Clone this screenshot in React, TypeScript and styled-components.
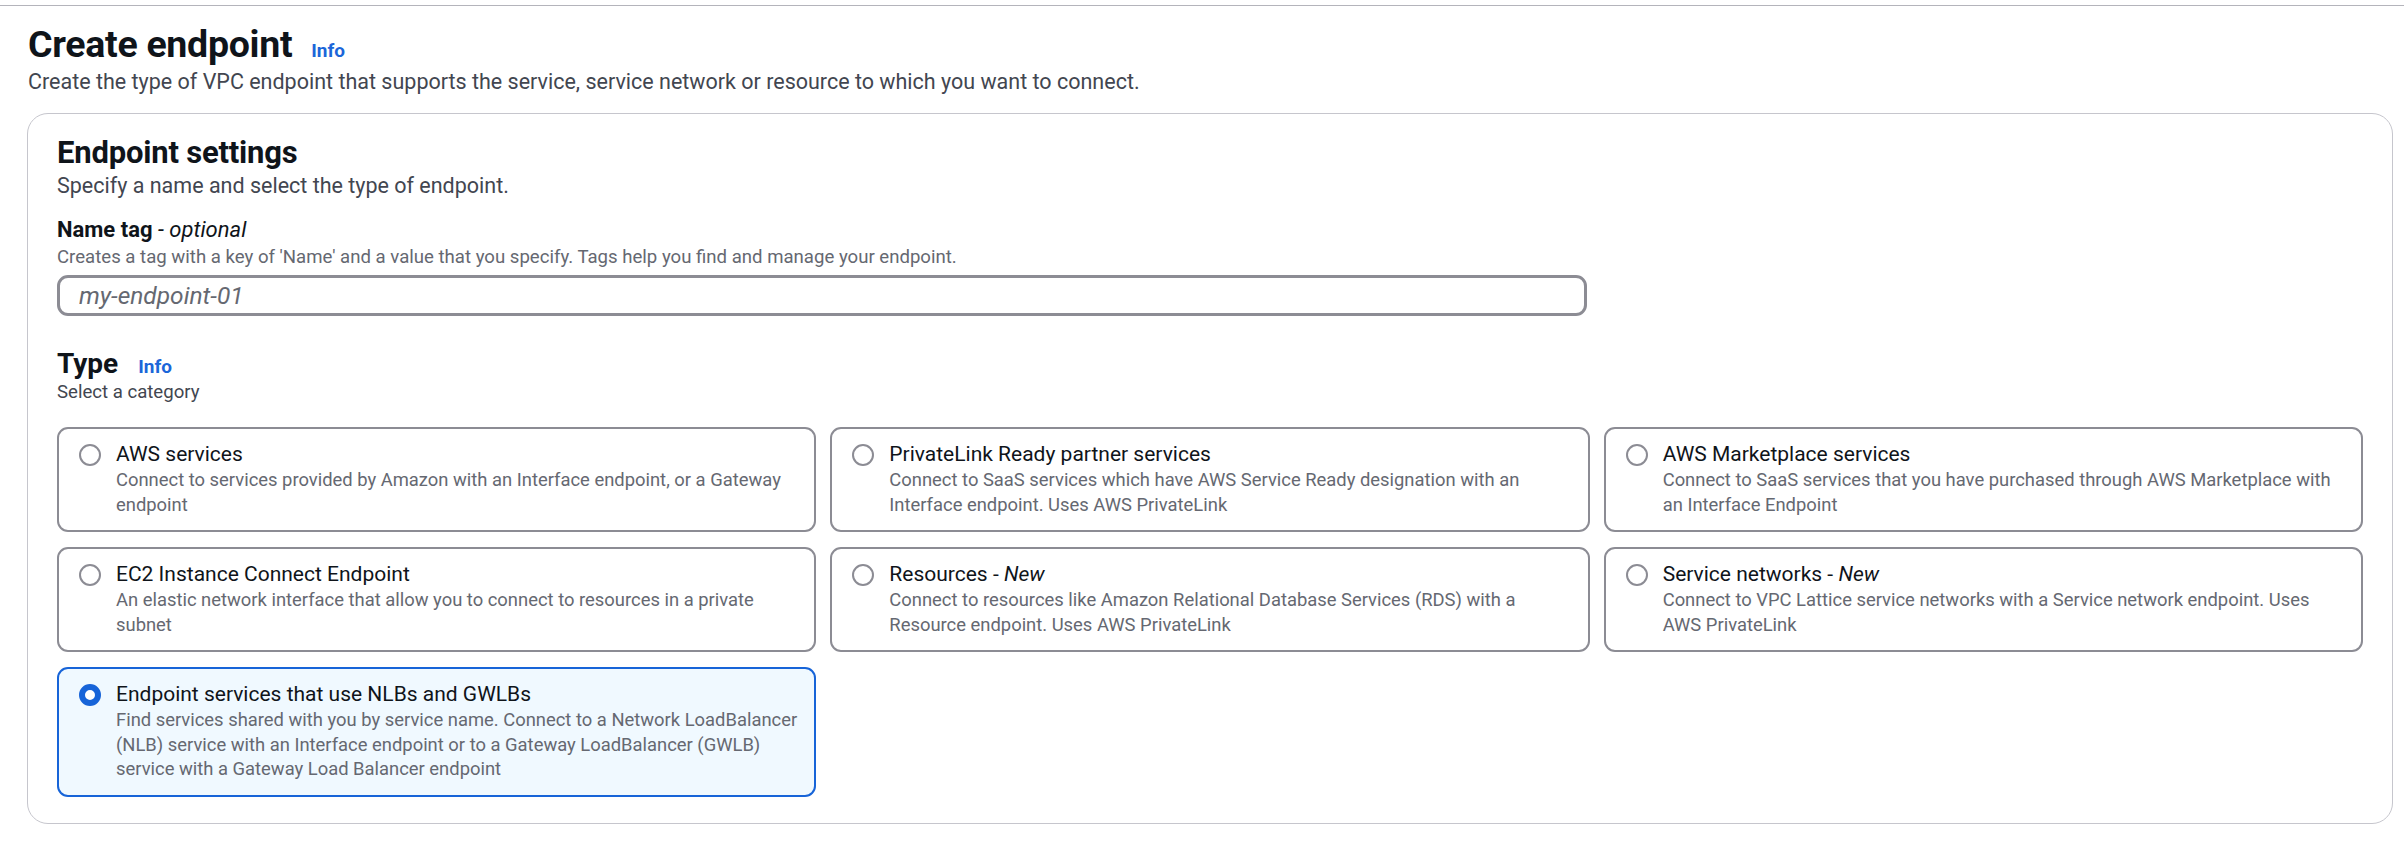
import { useState } from 'react';
import styled, { createGlobalStyle } from 'styled-components';

const GlobalStyle = createGlobalStyle`
  * { box-sizing: border-box; }
  body {
    margin: 0;
    background: #ffffff;
    font-family: Roboto, 'Liberation Sans', Arial, sans-serif;
    color: #0f141a;
  }
`

const TopRule = styled.div`
  height: 6px;
  border-bottom: 1.5px solid #b4b4bb;
`

const Page = styled.main`
  padding: 15px 11px 0 27px;
`

const TitleRow = styled.div`
  display: flex;
  align-items: baseline;
  gap: 19px;
  padding-left: 1px;
`

const H1 = styled.h1`
  margin: 0;
  font-size: 37.5px;
  line-height: 46px;
  font-weight: 700;
  letter-spacing: -0.3px;
`

const InfoLink = styled.a`
  color: #1b66d9;
  font-size: 19px;
  font-weight: 700;
  text-decoration: none;
  cursor: pointer;
`

const Lead = styled.p`
  margin: 0;
  padding-left: 1px;
  font-size: 21.5px;
  line-height: 30px;
  color: #424650;
`

const Panel = styled.section`
  margin-top: 16px;
  border: 1.5px solid #c6c6cd;
  border-radius: 21px;
  padding: 21px 29px 26px 29px;
`

const PanelTitle = styled.h2`
  margin: 0;
  font-size: 31px;
  line-height: 36px;
  font-weight: 700;
  letter-spacing: -0.2px;
`

const PanelDesc = styled.p`
  margin: 0;
  font-size: 21.5px;
  line-height: 30px;
  color: #424650;
`

const Field = styled.div`
  margin-top: 14px;
`

const Label = styled.div`
  font-size: 22px;
  line-height: 30px;
  font-weight: 700;
  color: #0f141a;

  em {
    font-weight: 400;
  }
`

const Hint = styled.div<{ $dark?: boolean }>`
  font-size: 18.6px;
  line-height: 25px;
  color: ${(p) => (p.$dark ? '#424650' : '#656871')};
`

const TextInput = styled.input`
  display: block;
  margin-top: 5px;
  width: 1530px;
  height: 41px;
  padding: 0 19px;
  border: 3px solid #8c8c94;
  border-radius: 11px;
  font-family: inherit;
  font-size: 24.5px;
  color: #0f141a;
  outline: none;

  &::placeholder {
    color: #656871;
    font-style: italic;
  }
`

const TypeHead = styled.div`
  margin-top: 32px;
  display: flex;
  align-items: baseline;
  gap: 20px;
`

const TypeTitle = styled.h3`
  margin: 0;
  font-size: 28px;
  line-height: 32px;
  font-weight: 700;
`

const TileGrid = styled.div`
  margin-top: 22px;
  display: grid;
  grid-template-columns: repeat(3, 1fr);
  gap: 15px 14px;
`

const Tile = styled.label<{ $checked: boolean }>`
  display: flex;
  align-items: flex-start;
  gap: 15px;
  padding: 12px 12px 13px 20px;
  border: 2.5px solid ${(p) => (p.$checked ? '#1764d8' : '#8c8c94')};
  border-radius: 11px;
  background: ${(p) => (p.$checked ? '#f0f9ff' : '#ffffff')};
  cursor: pointer;
`

const Radio = styled.span<{ $checked: boolean }>`
  flex: none;
  width: 22px;
  height: 22px;
  margin-top: 3px;
  border-radius: 50%;
  border: ${(p) => (p.$checked ? '6.5px solid #1764d8' : '2px solid #8c8c94')};
  background: #ffffff;
`

const TileBody = styled.div`
  display: flex;
  flex-direction: column;
`

const TileTitle = styled.div`
  font-size: 21px;
  line-height: 27px;
  color: #0f141a;
`

const TileDesc = styled.div`
  font-size: 18.4px;
  line-height: 24.5px;
  color: #656871;
`

type Option = { id: string; title: string; tag?: string; desc: string };

const options: Option[] = [
  {
    id: 'aws',
    title: 'AWS services',
    desc: 'Connect to services provided by Amazon with an Interface endpoint, or a Gateway endpoint',
  },
  {
    id: 'partner',
    title: 'PrivateLink Ready partner services',
    desc: 'Connect to SaaS services which have AWS Service Ready designation with an Interface endpoint. Uses AWS PrivateLink',
  },
  {
    id: 'marketplace',
    title: 'AWS Marketplace services',
    desc: 'Connect to SaaS services that you have purchased through AWS Marketplace with an Interface Endpoint',
  },
  {
    id: 'ec2',
    title: 'EC2 Instance Connect Endpoint',
    desc: 'An elastic network interface that allow you to connect to resources in a private subnet',
  },
  {
    id: 'resources',
    title: 'Resources',
    tag: 'New',
    desc: 'Connect to resources like Amazon Relational Database Services (RDS) with a Resource endpoint. Uses AWS PrivateLink',
  },
  {
    id: 'networks',
    title: 'Service networks',
    tag: 'New',
    desc: 'Connect to VPC Lattice service networks with a Service network endpoint. Uses AWS PrivateLink',
  },
  {
    id: 'nlb',
    title: 'Endpoint services that use NLBs and GWLBs',
    desc: 'Find services shared with you by service name. Connect to a Network LoadBalancer (NLB) service with an Interface endpoint or to a Gateway LoadBalancer (GWLB) service with a Gateway Load Balancer endpoint',
  },
];

export default function App() {
  const [selected, setSelected] = useState('nlb');

  return (
    <>
      <GlobalStyle />
      <TopRule />
      <Page>
        <TitleRow>
          <H1>Create endpoint</H1>
          <InfoLink>Info</InfoLink>
        </TitleRow>
        <Lead>
          Create the type of VPC endpoint that supports the service, service network or resource to which you want to connect.
        </Lead>

        <Panel>
          <PanelTitle>Endpoint settings</PanelTitle>
          <PanelDesc>Specify a name and select the type of endpoint.</PanelDesc>

          <Field>
            <Label>
              Name tag <em>- optional</em>
            </Label>
            <Hint>
              Creates a tag with a key of 'Name' and a value that you specify. Tags help you find and manage your endpoint.
            </Hint>
            <TextInput placeholder='my-endpoint-01' />
          </Field>

          <TypeHead>
            <TypeTitle>Type</TypeTitle>
            <InfoLink>Info</InfoLink>
          </TypeHead>
          <Hint $dark>Select a category</Hint>

          <TileGrid>
            {options.map((o) => {
              const checked = o.id === selected;
              return (
                <Tile key={o.id} $checked={checked} onClick={() => setSelected(o.id)}>
                  <Radio $checked={checked} />
                  <TileBody>
                    <TileTitle>
                      {o.title}
                      {o.tag && (
                        <>
                          {' - '}
                          <em>{o.tag}</em>
                        </>
                      )}
                    </TileTitle>
                    <TileDesc>{o.desc}</TileDesc>
                  </TileBody>
                </Tile>
              );
            })}
          </TileGrid>
        </Panel>
      </Page>
    </>
  );
}
